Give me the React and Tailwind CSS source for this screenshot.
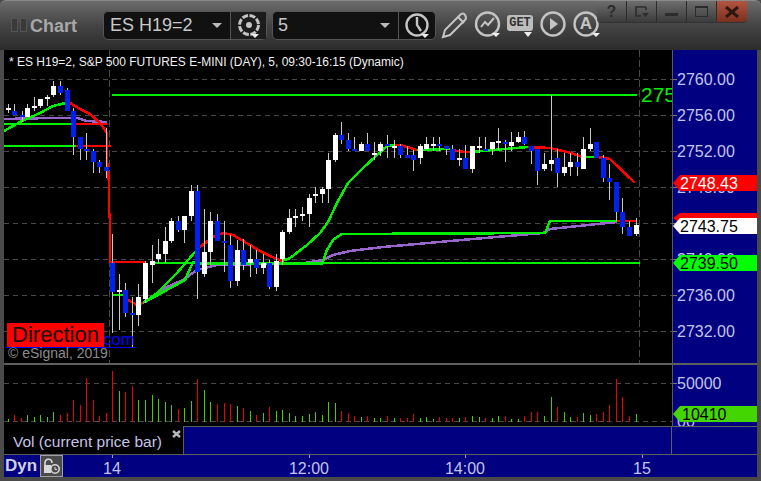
// page-space coordinates: the chart svgs use viewBoxes that match the screenshot
const candles = [
  [8,104,113,108,110,'w'],[14,104,115,111,115,'b'],[22,111,122,115,117,'b'],[27,104,117,108,117,'w'],[34,97,111,106,108,'w'],[40,99,108,99,106,'w'],[47,95,106,97,99,'w'],[53,81,97,86,95,'w'],[60,81,95,86,93,'b'],[67,88,111,90,111,'b'],
  [73,108,155,111,137,'b'],[80,137,160,137,149,'b'],[86,133,160,149,151,'b'],[93,149,173,151,162,'b'],[99,160,173,162,167,'b'],[106,128,178,167,171,'b'],[112,234,333,263,292,'b'],[119,274,330,290,292,'w'],[125,283,317,290,313,'b'],[132,297,347,313,315,'b'],
  [138,284,326,297,315,'w'],[145,261,303,263,299,'w'],[152,245,283,261,265,'w'],[158,239,263,254,259,'w'],[165,227,263,241,254,'w'],[171,218,243,221,241,'w'],[178,216,232,221,230,'b'],[184,216,243,216,230,'w'],[191,185,221,191,216,'w'],[197,185,299,191,272,'b'],
  [204,209,277,252,274,'w'],[210,212,265,221,252,'w'],[217,214,241,221,241,'b'],[224,221,272,241,243,'b'],[230,235,288,245,281,'b'],[237,240,286,250,281,'w'],[243,239,270,250,265,'b'],[250,245,277,259,263,'w'],[256,250,274,259,268,'b'],[263,254,274,263,268,'w'],
  [269,260,289,263,287,'b'],[276,254,291,261,287,'w'],[282,230,265,232,259,'w'],[289,209,234,218,232,'w'],[295,209,227,216,218,'w'],[302,207,221,214,216,'w'],[309,194,227,198,214,'w'],[315,187,203,194,196,'w'],[322,187,203,189,194,'w'],[328,153,203,160,189,'w'],
  [335,133,162,135,160,'w'],[341,122,144,135,140,'b'],[348,133,151,140,149,'b'],[354,137,151,149,151,'b'],[361,142,151,144,151,'w'],[367,133,151,144,151,'b'],[374,142,160,153,155,'w'],[380,142,156,144,151,'w'],[387,135,158,144,146,'b'],[394,140,158,146,148,'w'],
  [400,144,158,146,155,'b'],[407,146,158,155,158,'b'],[413,150,171,155,160,'b'],[420,144,164,146,158,'w'],[426,137,149,144,149,'w'],[433,137,151,144,146,'w'],[439,137,151,144,146,'b'],[446,146,155,146,149,'b'],[452,145,160,149,160,'b'],[459,149,166,158,160,'w'],
  [465,145,169,158,169,'b'],[472,146,173,146,169,'w'],[479,137,153,146,148,'w'],[485,137,151,149,151,'b'],[492,142,155,142,149,'w'],[498,128,150,141,143,'w'],[505,140,162,142,144,'b'],[511,132,151,142,146,'w'],[518,132,143,137,142,'w'],[524,131,145,137,144,'b'],
  [531,146,164,146,151,'b'],[537,149,185,149,171,'b'],[544,153,171,164,169,'w'],[551,95,171,160,164,'w'],[557,149,187,158,173,'b'],[564,153,176,167,173,'w'],[570,153,176,162,167,'w'],[577,153,176,162,167,'b'],[583,137,169,149,169,'w'],[590,128,151,144,149,'w'],
  [596,142,158,142,158,'b'],[603,155,182,158,178,'b'],[609,164,200,178,182,'b'],[616,182,221,182,212,'b'],[622,198,234,212,227,'b'],[629,221,236,227,236,'b'],[636,218,236,225,234,'w'],
]

const volumes = [
  [8,3,'g'],[14,7,'r'],[21,4,'r'],[27,7,'g'],[34,5,'g'],[40,7,'g'],[47,5,'g'],[53,10,'g'],[60,7,'r'],[67,9,'r'],[73,22,'r'],[80,17,'r'],[86,44,'r'],[93,22,'r'],[99,6,'r'],[106,9,'r'],[112,51,'r'],[119,31,'g'],[125,30,'r'],[132,36,'r'],
  [138,22,'g'],[145,22,'g'],[152,27,'g'],[158,23,'g'],[165,20,'g'],[171,17,'g'],[178,13,'r'],[184,14,'g'],[191,21,'g'],[197,43,'r'],[204,32,'g'],[210,20,'g'],[217,18,'r'],[224,19,'r'],[230,18,'r'],[237,16,'g'],[243,14,'r'],[250,11,'g'],[256,7,'r'],[263,9,'g'],
  [269,15,'r'],[276,11,'g'],[282,12,'g'],[289,9,'g'],[295,6,'g'],[302,6,'g'],[309,8,'g'],[315,10,'g'],[322,7,'g'],[328,20,'g'],[335,19,'g'],[341,11,'r'],[348,9,'r'],[354,6,'r'],[361,5,'g'],[367,6,'r'],[374,4,'g'],[380,4,'g'],[387,6,'r'],[394,4,'g'],
  [400,4,'r'],[407,4,'r'],[413,8,'r'],[420,4,'g'],[426,5,'g'],[433,3,'g'],[439,5,'r'],[446,4,'r'],[452,4,'r'],[459,4,'g'],[465,5,'r'],[472,6,'g'],[479,5,'g'],[485,4,'r'],[492,4,'g'],[498,6,'g'],[505,6,'r'],[511,3,'g'],[518,3,'g'],[524,6,'r'],
  [531,10,'r'],[537,10,'r'],[544,6,'g'],[551,25,'g'],[557,15,'r'],[564,10,'g'],[570,5,'g'],[577,5,'r'],[583,9,'g'],[590,7,'g'],[596,8,'r'],[603,10,'r'],[609,17,'r'],[616,43,'r'],[622,25,'r'],[629,6,'r'],[636,8,'g'],
]

const gridY = [79, 115, 151, 187, 223, 259, 295, 331]
const priceLabels = [['2760.00', 79], ['2756.00', 115], ['2752.00', 151], ['2748.00', 187], ['2740.00', 259], ['2736.00', 295], ['2732.00', 331]]

const RED = '#ff0000'
const GREEN = '#00f000'
const PURPLE = '#9966cc'

const greenLines = [
  '4,131 20,122 40,113 53,106 70,102',
  '4,124 76,124', '4,146 76,146', '112,95 637,95', '150,263 640,263',
  '113,295 123,295', '143,303 157,293 177,273 195,252 200,247',
  '145,302 185,280 193,262 200,264 322,264 327,250 333,240 342,234 545,233 550,221 617,221',
  '282,261 290,258 307,245 320,233 328,222 337,203 348,183 363,168 375,157 387,146 395,145',
  '417,150 450,149', '470,152 528,147', '583,157 598,157',
]
const redLines = [
  '70,103 80,109 90,114 100,123 107,133 107,160 109,183 109,210 110,220 110,262 145,262',
  '76,124 107,124', '76,146 111,146', '123,296 128,300 137,305 143,303',
  '200,247 213,237 223,233 233,235 250,245 260,251 270,256 282,261',
  '395,145 400,145 417,150', '450,150 465,152 470,152', '528,147 550,148 567,152 583,157', '598,157 610,159 635,183',
  '617,221 637,221',
]
const purpleLines = [
  '4,119 50,118 77,118 87,121 107,122',
  '145,302 167,287 183,280 197,270 217,265 305,263 323,260 333,255 350,251 383,247 417,244 450,241 543,233 550,229 617,222',
]

function Candle({ c }) {
  const [x, top, bot, bodyTop, bodyBot, kind] = c
  return (
    <g shapeRendering="crispEdges">
      <line x1={x + 0.5} x2={x + 0.5} y1={top} y2={bot} stroke="#c8c8c8" strokeWidth="1" />
      <rect x={x - 2} y={bodyTop} width="5" height={bodyBot - bodyTop} fill={kind === 'w' ? '#ffffff' : '#0020f0'} />
    </g>
  )
}

function PriceTag({ y, h = 16, bg, text, children }) {
  return (
    <div
      className={`absolute left-0 w-[84px] pl-[7px] pt-[1px] flex items-center text-[16px] [clip-path:polygon(0_50%,7px_0,100%_0,100%_100%,7px_100%)] ${bg} ${text}`}
      style={{ top: y - 50, height: h }}
    >
      {children}
    </div>
  )
}

function TitleCaret() {
  return <div className="w-0 h-0 border-l-[5px] border-r-[5px] border-t-[5px] border-l-transparent border-r-transparent border-t-[#bbbbbb]" />
}

function SmallCaret({ x, y }) {
  return <polygon points={`${x},${y} ${x + 8},${y} ${x + 4},${y + 4}`} fill="#eeeeee" stroke="none" />
}

function ToolIcon({ children }) {
  return (
    <svg width="28" height="28" viewBox="0 0 28 28" fill="none" stroke="#c4c4c4" strokeWidth="2.4">
      {children}
    </svg>
  )
}

function WinButton({ children, className = '' }) {
  return (
    <div className={`w-[30px] h-[21px] flex items-center justify-center border-r border-[#2c2c2c] bg-gradient-to-b from-[#6e6e6e] to-[#3c3c3c] ${className}`}>
      {children}
    </div>
  )
}

export default function App() {
  return (
    <div className="w-[761px] h-[481px] flex flex-col overflow-hidden bg-[#4a4a4a] font-['Liberation_Sans',sans-serif]">
      {/* title bar and toolbar */}
      <div className="relative h-[50px] shrink-0 flex items-start bg-gradient-to-b from-[#6c6c6c] via-[#444444] to-[#2c2c2c] border-t border-[#8a8a8a] rounded-t-[6px]">
        <div className="flex items-center gap-[2px] ml-[11px] mt-[17px]">
          <div className="w-[7px] h-[14px] border border-[#555555] bg-[#3a3a3a]" />
          <div className="w-[7px] h-[14px] border border-[#555555] bg-[#3a3a3a]" />
        </div>
        <div className="ml-[3px] mt-[14px] w-[46px] text-[18px] leading-[22px] font-bold text-[#a8a8a8]">Chart</div>

        <div className="ml-[27px] mt-[10px] w-[164px] h-[29px] flex items-center rounded-[5px] border border-[#555555] bg-[#111111]">
          <span className="w-[108px] pl-[6px] text-[18px] text-[#c8c8c8]">ES H19=2</span>
          <TitleCaret />
          <div className="ml-[8px] h-full flex-1 border-l border-[#555555] bg-[#1c1c1c] flex items-center justify-center">
            <ToolIcon>
              <circle cx="14" cy="13" r="9.5" strokeDasharray="6 1.5" strokeWidth="3" />
              <circle cx="14" cy="13" r="3" fill="#c4c4c4" stroke="none" />
              <SmallCaret x={16} y={22} />
            </ToolIcon>
          </div>
        </div>

        <div className="ml-[5px] mt-[10px] w-[164px] h-[29px] flex items-center rounded-[5px] border border-[#555555] bg-[#111111]">
          <span className="w-[107px] pl-[5px] text-[18px] text-[#c8c8c8]">5</span>
          <TitleCaret />
          <div className="ml-[8px] h-full flex-1 border-l border-[#555555] flex items-center justify-center">
            <ToolIcon>
              <circle cx="14" cy="13" r="10.5" />
              <path d="M14 5v8l4 6" />
              <SmallCaret x={18} y={22} />
            </ToolIcon>
          </div>
        </div>

        <div className="ml-[5px] mt-[10px] flex items-center">
          <div className="w-[33px]">
            <ToolIcon>
              <path d="M2 26l2-7L19 4c2-2 4-2 5 0s2 3 0 5L9 24z" strokeWidth="2" />
              <path d="M17 6l6 6" strokeWidth="2" />
            </ToolIcon>
          </div>
          <div className="w-[33px]">
            <ToolIcon>
              <circle cx="13.5" cy="13" r="11.5" />
              <path d="M7 16l4-5 3 3 6-7" strokeWidth="2" />
              <SmallCaret x={18} y={22} />
            </ToolIcon>
          </div>
          <div className="relative w-[33px] h-[28px]">
            <div className="absolute left-0 top-[4px] w-[26px] h-[16px] rounded-[3px] bg-[#bdbdbd] text-[#333333] text-[12px] leading-[16px] font-bold text-center font-['Liberation_Mono',monospace]">GET</div>
            <div className="absolute left-[17px] top-[21px] w-0 h-0 border-l-[4px] border-r-[4px] border-t-[5px] border-l-transparent border-r-transparent border-t-[#eeeeee]" />
          </div>
          <div className="w-[33px]">
            <ToolIcon>
              <circle cx="13" cy="13" r="11.5" />
              <polygon points="10,7 18,13 10,19" fill="#c4c4c4" stroke="none" />
            </ToolIcon>
          </div>
          <div className="relative w-[26px] h-[28px]">
            <ToolIcon>
              <circle cx="13" cy="13" r="11.5" />
              <SmallCaret x={19} y={22} />
            </ToolIcon>
            <div className="absolute left-0 w-[26px] top-[3px] text-center text-[17px] leading-[20px] font-bold text-[#c4c4c4]">A</div>
          </div>
        </div>

        {/* window buttons sit over the toolbar */}
        <div className="absolute left-[597px] top-0 flex rounded-b-[4px] rounded-t-[2px] overflow-hidden border-b border-[#333333]">
          <WinButton><span className="text-[16px] font-bold text-[#2c2c2c]">?</span></WinButton>
          <WinButton>
            <svg width="16" height="14" viewBox="0 0 16 14" fill="none" stroke="#2c2c2c" strokeWidth="1.6">
              <path d="M12 2H2v9h5" /><path d="M12 2v3" />
              <polygon points="8,8 15,8 11.5,12" fill="#2c2c2c" stroke="none" />
            </svg>
          </WinButton>
          <WinButton><div className="w-[13px] h-[3px] mt-[6px] bg-[#2c2c2c]" /></WinButton>
          <WinButton><div className="w-[13px] h-[11px] border border-[#2c2c2c] border-t-[2px]" /></WinButton>
          <WinButton className="border-r-0 from-[#b25540] to-[#7c3020]">
            <svg width="14" height="12" viewBox="0 0 14 12" stroke="#2c1810" strokeWidth="3"><path d="M1 1l12 10M13 1L1 11" /></svg>
          </WinButton>
        </div>
      </div>

      <div className="flex-1 flex flex-col mx-[4px] mb-[4px] min-h-0">
        {/* price pane */}
        <div className="flex h-[313px] shrink-0">
          <div className="relative w-[668px] bg-black overflow-hidden">
            <svg className="absolute inset-0" width="668" height="313" viewBox="4 50 668 313" fill="none">
              <g shapeRendering="crispEdges">
                {gridY.map((y) => (
                  <line key={y} x1="4" x2="672" y1={y + 0.5} y2={y + 0.5} stroke="#484848" strokeDasharray="5 4" />
                ))}
                <line x1="109.5" x2="109.5" y1="50" y2="363" stroke="#484848" strokeDasharray="7 3" />
                <line x1="639.5" x2="639.5" y1="50" y2="363" stroke="#484848" strokeDasharray="7 3" />
                {purpleLines.map((p, i) => <polyline key={i} points={p} stroke={PURPLE} strokeWidth="2.5" />)}
                {greenLines.map((p, i) => <polyline key={i} points={p} stroke={GREEN} strokeWidth="2.5" />)}
                {redLines.map((p, i) => <polyline key={i} points={p} stroke={RED} strokeWidth="2.5" />)}
              </g>
              {candles.map((c) => <Candle key={c[0]} c={c} />)}
            </svg>

            <div className="absolute left-[5px] top-[5px] text-[12px] leading-[14px] text-[#f0f0f0] whitespace-nowrap">
              * ES H19=2, S&amp;P 500 FUTURES E-MINI (DAY), 5, 09:30-16:15 (Dynamic)
            </div>
            <div className="absolute left-[637px] top-[32px] text-[21px] leading-[26px] text-[#00f000] whitespace-nowrap">2758</div>

            <div className="absolute left-[2px] bottom-[15px] w-[130px] border-b border-[#0000ff] flex items-end">
              <div className="relative z-10 w-[97px] h-[24px] ml-[1px] bg-[#ff0000] text-[22px] leading-[24px] text-[#111111] text-center">Direction</div>
              <div className="-ml-[6px] -mb-[3px] text-[17px] leading-[20px] text-[#0000ff]">.com</div>
            </div>
            <div className="absolute left-[4px] bottom-[2px] text-[14px] leading-[16px] text-[#8c8c8c] whitespace-nowrap">© eSignal, 2019</div>
          </div>

          <div className="relative w-[85px] bg-[#000080] border-l border-[#5a5a5a] text-[16px] leading-[16px] text-[#c4c4e8] overflow-hidden">
            {priceLabels.map(([t, y]) => (
              <div key={t} className="absolute left-[4px]" style={{ top: y - 57 }}>{t}</div>
            ))}
            {gridY.map((y) => <div key={y} className="absolute left-0 w-[4px] h-px bg-[#777777]" style={{ top: y - 50 }} />)}
            <PriceTag y={175} bg="bg-[#ff0000]" text="text-white">2748.43</PriceTag>
            <PriceTag y={213} h={10} bg="bg-[#ff0000]" text="text-white" />
            <PriceTag y={218} bg="bg-white" text="text-black">2743.75</PriceTag>
            <PriceTag y={255} bg="bg-[#00ff00]" text="text-black">2739.50</PriceTag>
          </div>
        </div>

        {/* volume pane */}
        <div className="flex h-[63px] shrink-0 border-t-2 border-[#5e5e5e]">
          <div className="w-[668px] bg-black">
            <svg className="block" width="668" height="61" viewBox="4 365 668 61" fill="none" shapeRendering="crispEdges">
              <line x1="4" x2="672" y1="383.5" y2="383.5" stroke="#484848" strokeDasharray="5 4" />
              <line x1="4" x2="672" y1="421.5" y2="421.5" stroke="#484848" strokeDasharray="5 4" />
              {volumes.map(([x, h, c]) => (
                <line key={x} x1={x + 0.5} x2={x + 0.5} y1={422 - h} y2="422" stroke={c === 'r' ? '#ee0000' : '#44d000'} />
              ))}
            </svg>
          </div>
          <div className="relative w-[85px] bg-[#000080] border-l border-[#5a5a5a] text-[16px] leading-[16px] text-[#c4c4e8] overflow-hidden">
            <div className="absolute left-[4px] top-[11px]">50000</div>
            <div className="absolute left-[4px] top-[49px] h-[12px] overflow-hidden">00</div>
            <div className="absolute left-0 top-[18px] w-[4px] h-px bg-[#777777]" />
            <div className="absolute left-0 top-[41px] w-[84px] h-[16px] pl-[9px] pt-[1px] flex items-center text-[16px] bg-[#44d600] text-black [clip-path:polygon(0_50%,7px_0,100%_0,100%_100%,7px_100%)]">
              10410
            </div>
          </div>
        </div>

        {/* study legend strip */}
        <div className="flex h-[28px] shrink-0 border-t border-[#5e5e5e] bg-[#000080]">
          <div className="relative w-[180px] -mt-px bg-black border-r border-[#5e5e5e] text-[15.5px] leading-[20px] text-[#c4c4e8] pl-[9px] pt-[6px] whitespace-nowrap">
            Vol (current price bar)
            <svg className="absolute left-[168px] top-[4px]" width="9" height="8" viewBox="0 0 9 8" stroke="#b8b8b8" strokeWidth="2.4"><path d="M1 1l7 6M8 1L1 7" /></svg>
          </div>
          <div className="w-[488px] border-r border-[#5e5e5e]" />
        </div>

        {/* time axis */}
        <div className="relative flex-1 min-h-0 flex items-center bg-[#000080] border-t border-[#5e5e5e] text-[16px] text-[#c4c4e8]">
          <span className="ml-[1px] text-[17px] leading-[20px] font-bold text-[#d0d0e0]">Dyn</span>
          <div className="ml-[3px] w-[23px] h-[22px] flex items-center justify-center bg-[#4a4a4a] border border-[#a0a0a0]">
            <svg width="19" height="18" viewBox="0 0 19 18" fill="none" stroke="#d8d8d8" strokeWidth="1.6">
              <path d="M3 16V6c0-5 7-5 7 0" />
              <rect x="2" y="8" width="7" height="8" fill="#d8d8d8" stroke="none" />
              <circle cx="13" cy="12" r="4.2" fill="#4a4a4a" />
              <path d="M13 10v2.5h2" strokeWidth="1" />
            </svg>
          </div>
          {[['14', 112], ['12:00', 309], ['14:00', 465], ['15', 642]].map(([t, x]) => (
            <div key={t}>
              <div className="absolute top-0 w-px h-[3px] bg-[#9a9ac0]" style={{ left: x - 4 }} />
              <div className="absolute top-[5px] w-[50px] text-center leading-[18px]" style={{ left: x - 29 }}>{t}</div>
            </div>
          ))}
        </div>
      </div>
    </div>
  )
}
